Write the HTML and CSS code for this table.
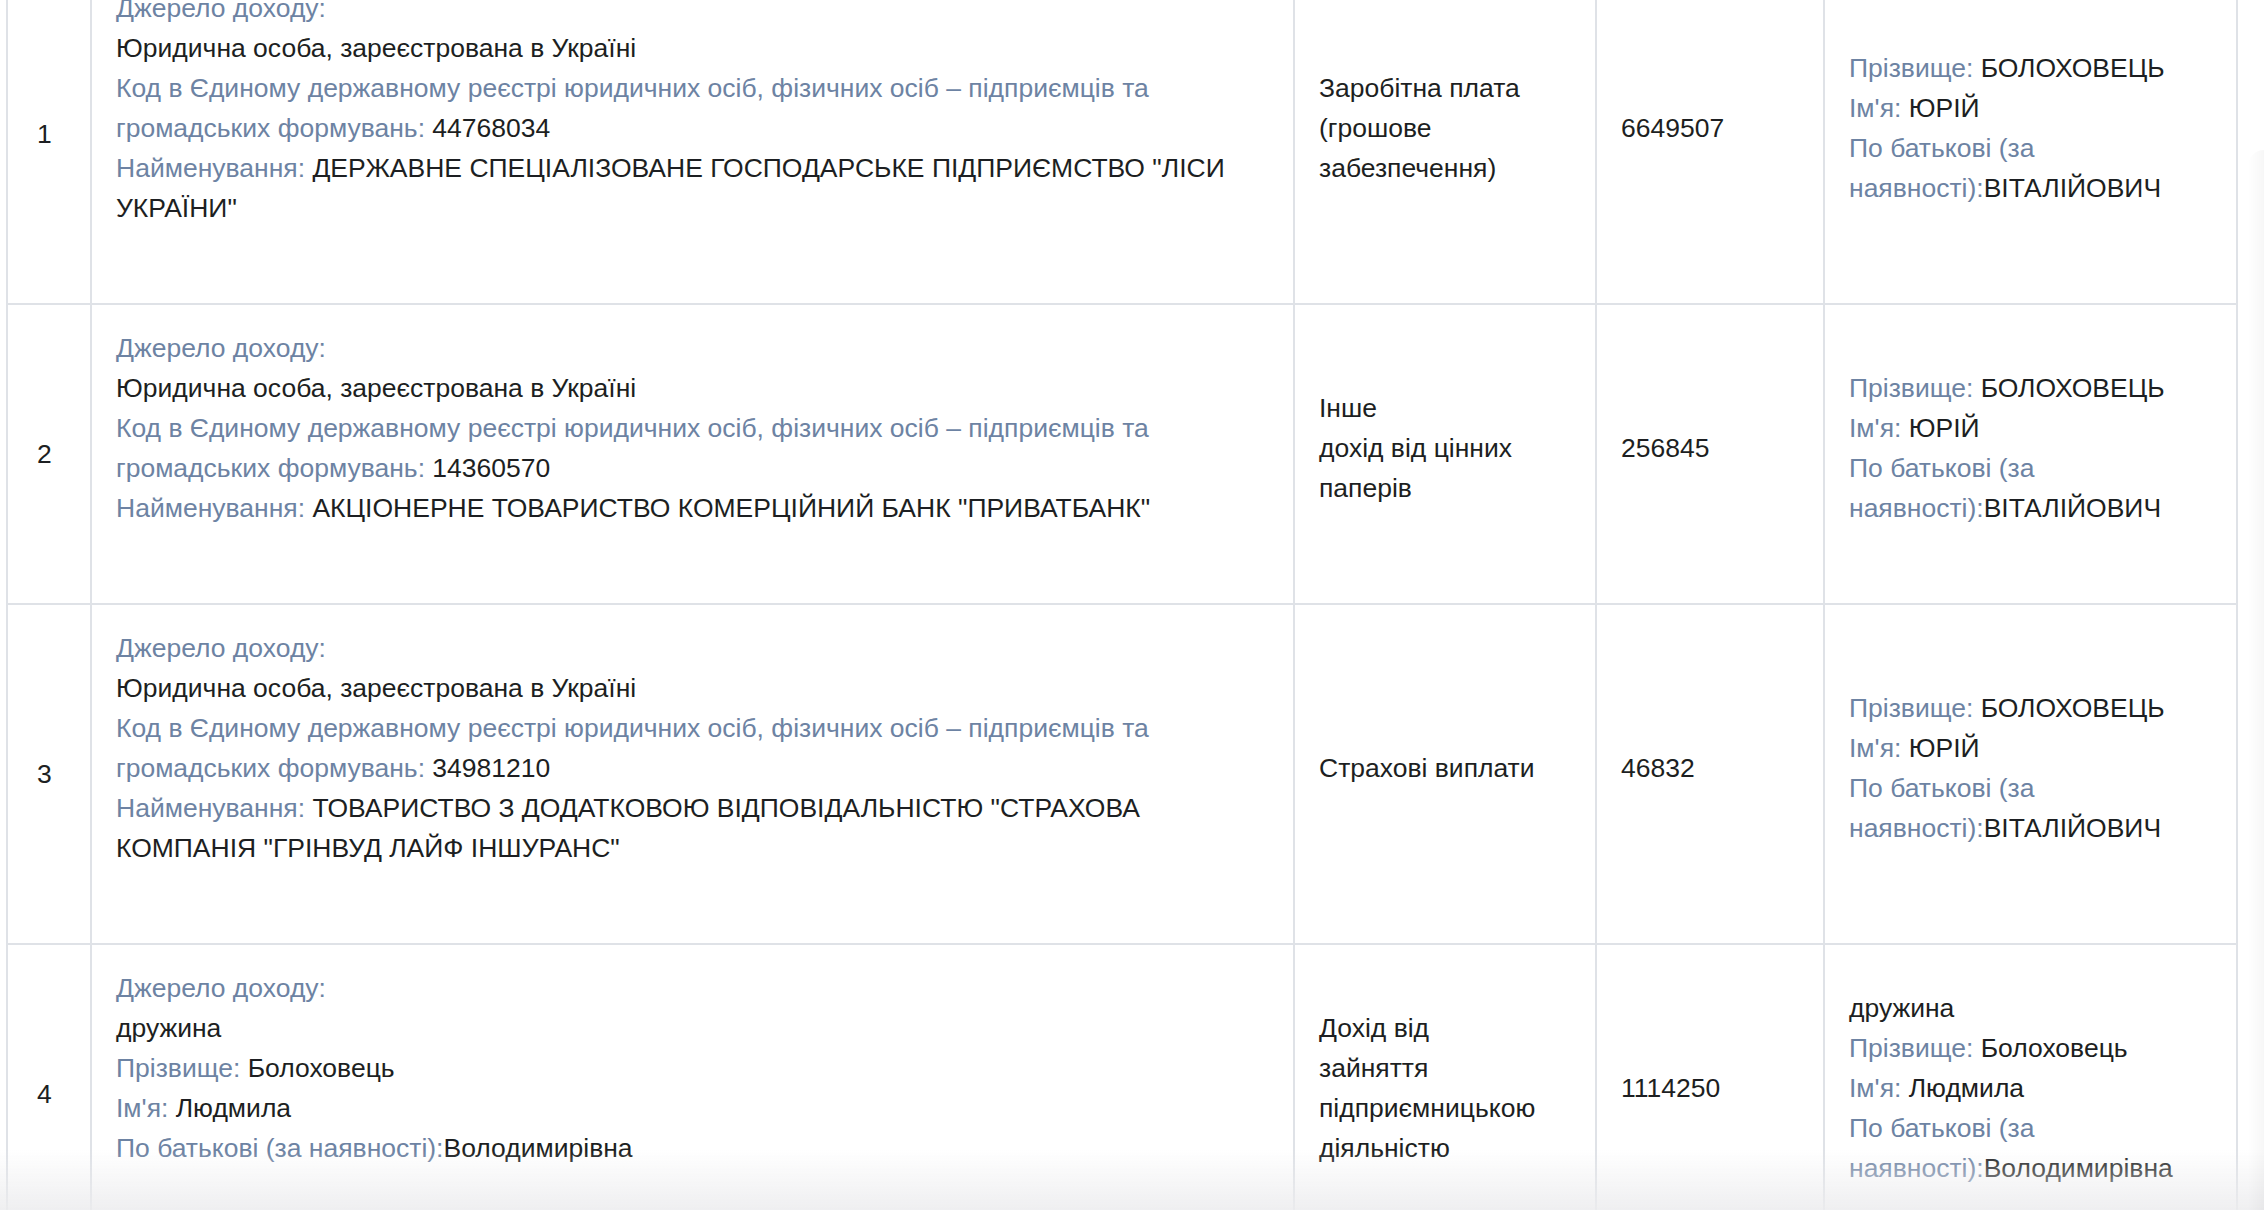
FILE: index.html
```html
<!DOCTYPE html>
<html lang="uk">
<head>
<meta charset="utf-8">
<title>Доходи</title>
<link rel="stylesheet" href="styles.css">
</head>
<body>
<div class="wrap">
<table class="income">
  <colgroup>
    <col class="c-num">
    <col class="c-src">
    <col class="c-type">
    <col class="c-sum">
    <col class="c-who">
  </colgroup>
  <tbody>
    <tr>
      <td class="num">1</td>
      <td class="src">
        <div><span class="lbl">Джерело доходу:</span></div>
        <div>Юридична особа, зареєстрована в Україні</div>
        <div><span class="lbl">Код в Єдиному державному реєстрі юридичних осіб, фізичних осіб – підприємців та громадських формувань:</span> 44768034</div>
        <div><span class="lbl">Найменування:</span> ДЕРЖАВНЕ СПЕЦІАЛІЗОВАНЕ ГОСПОДАРСЬКЕ ПІДПРИЄМСТВО "ЛІСИ УКРАЇНИ"</div>
      </td>
      <td class="type">Заробітна плата<br>(грошове<br>забезпечення)</td>
      <td class="sum">6649507</td>
      <td class="who">
        <div><span class="lbl">Прізвище:</span> БОЛОХОВЕЦЬ</div>
        <div><span class="lbl">Ім'я:</span> ЮРІЙ</div>
        <div><span class="lbl">По батькові (за наявності):</span>ВІТАЛІЙОВИЧ</div>
      </td>
    </tr>
    <tr>
      <td class="num">2</td>
      <td class="src">
        <div><span class="lbl">Джерело доходу:</span></div>
        <div>Юридична особа, зареєстрована в Україні</div>
        <div><span class="lbl">Код в Єдиному державному реєстрі юридичних осіб, фізичних осіб – підприємців та громадських формувань:</span> 14360570</div>
        <div><span class="lbl">Найменування:</span> АКЦІОНЕРНЕ ТОВАРИСТВО КОМЕРЦІЙНИЙ БАНК "ПРИВАТБАНК"</div>
      </td>
      <td class="type">Інше<br>дохід від цінних<br>паперів</td>
      <td class="sum">256845</td>
      <td class="who">
        <div><span class="lbl">Прізвище:</span> БОЛОХОВЕЦЬ</div>
        <div><span class="lbl">Ім'я:</span> ЮРІЙ</div>
        <div><span class="lbl">По батькові (за наявності):</span>ВІТАЛІЙОВИЧ</div>
      </td>
    </tr>
    <tr>
      <td class="num">3</td>
      <td class="src">
        <div><span class="lbl">Джерело доходу:</span></div>
        <div>Юридична особа, зареєстрована в Україні</div>
        <div><span class="lbl">Код в Єдиному державному реєстрі юридичних осіб, фізичних осіб – підприємців та громадських формувань:</span> 34981210</div>
        <div><span class="lbl">Найменування:</span> ТОВАРИСТВО З ДОДАТКОВОЮ ВІДПОВІДАЛЬНІСТЮ "СТРАХОВА КОМПАНІЯ "ГРІНВУД ЛАЙФ ІНШУРАНС"</div>
      </td>
      <td class="type">Страхові виплати</td>
      <td class="sum">46832</td>
      <td class="who">
        <div><span class="lbl">Прізвище:</span> БОЛОХОВЕЦЬ</div>
        <div><span class="lbl">Ім'я:</span> ЮРІЙ</div>
        <div><span class="lbl">По батькові (за наявності):</span>ВІТАЛІЙОВИЧ</div>
      </td>
    </tr>
    <tr>
      <td class="num">4</td>
      <td class="src">
        <div><span class="lbl">Джерело доходу:</span></div>
        <div>дружина</div>
        <div><span class="lbl">Прізвище:</span> Болоховець</div>
        <div><span class="lbl">Ім'я:</span> Людмила</div>
        <div><span class="lbl">По батькові (за наявності):</span>Володимирівна</div>
      </td>
      <td class="type">Дохід від<br>зайняття<br>підприємницькою<br>діяльністю</td>
      <td class="sum">1114250</td>
      <td class="who">
        <div>дружина</div>
        <div><span class="lbl">Прізвище:</span> Болоховець</div>
        <div><span class="lbl">Ім'я:</span> Людмила</div>
        <div><span class="lbl">По батькові (за наявності):</span>Володимирівна</div>
      </td>
    </tr>
  </tbody>
</table>
</div>
<div class="fade-bottom"></div>
<div class="shade-right"></div>
</body>
</html>
```

FILE: styles.css
```css
html, body {
  margin: 0;
  padding: 0;
  background: #ffffff;
  overflow: hidden;
}

body {
  font-family: "Liberation Sans", Arial, Helvetica, sans-serif;
  font-size: 26.5px;
  line-height: 40px;
  color: #1d1f22;
}

.wrap {
  padding-left: 6px;
  margin-top: -37px;
}

.income {
  table-layout: fixed;
  border-collapse: separate;
  border-spacing: 0;
  width: 2232px;
  border-left: 2px solid #dfe2e7;
  border-top: 2px solid #dfe2e7;
}

.c-num { width: 84px; }
.c-src { width: 1203px; }
.c-type { width: 302px; }
.c-sum { width: 228px; }
.c-who { width: 413px; }

.income td {
  box-sizing: border-box;
  border-right: 2px solid #dfe2e7;
  border-bottom: 2px solid #dfe2e7;
  vertical-align: middle;
  padding: 23px 24px 35px 24px;
}

.income td.num {
  padding: 23px 6px 23px 29px;
}

.income td.src {
  padding: 23px 24px 75px 24px;
}

.lbl {
  color: #6d83a3;
}

.fade-bottom {
  position: fixed;
  left: 0;
  right: 0;
  bottom: 0;
  height: 60px;
  background: linear-gradient(to bottom, rgba(240, 240, 242, 0), rgba(236, 236, 238, 0.85));
  pointer-events: none;
}

.shade-right {
  position: fixed;
  top: 150px;
  right: 0;
  bottom: 0;
  width: 16px;
  border-top-left-radius: 16px;
  background: linear-gradient(to right, rgba(0, 0, 0, 0), rgba(0, 0, 0, 0.03));
  pointer-events: none;
}
```
